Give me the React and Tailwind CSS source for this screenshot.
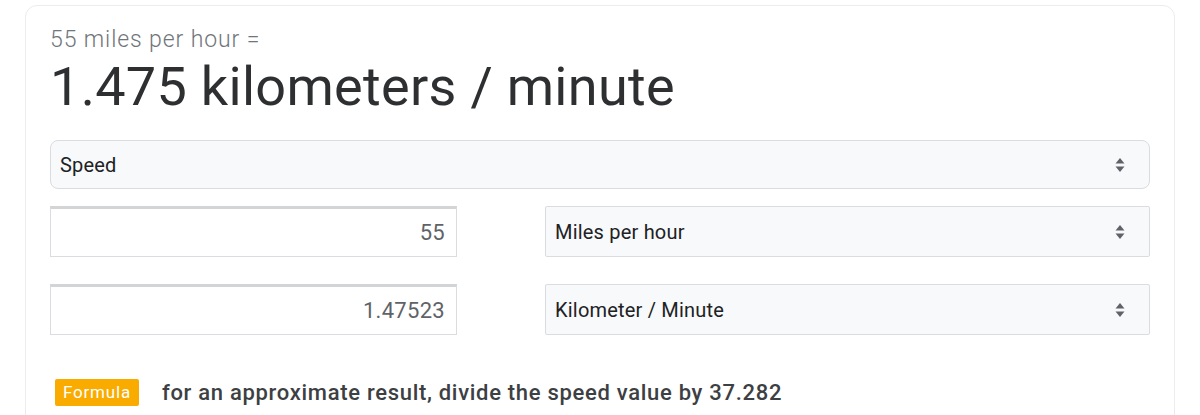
import React from "react";

const Arrows = () => (
  <svg width="10" height="16" viewBox="0 0 10 16" className="shrink-0">
    <path d="M5 1 L9.5 6.5 H0.5 Z" fill="#5f6368" />
    <path d="M5 15 L9.5 9.5 H0.5 Z" fill="#5f6368" />
  </svg>
);

const SelectBox = ({ label, className }) => (
  <div
    className={`flex items-center justify-between bg-[#f8f9fa] border border-[#dadce0] pl-[9px] pr-[24px] text-[20px] tracking-[0.2px] text-[#202124] ${className}`}
  >
    <span>{label}</span>
    <Arrows />
  </div>
);

const NumberBox = ({ value }) => (
  <div className="w-[407px] h-[51px] flex items-center justify-end border border-[#dadce0] border-t-[3px] border-t-[#d3d4d6] pr-[11px] text-[22px] tracking-[0.3px] text-[#5f6368] bg-white">
    {value}
  </div>
);

const App = () => {
  return (
    <div
      className="bg-white h-[415px] overflow-hidden pt-[5px] px-[25px]"
      style={{ fontFamily: "Roboto, 'Noto Sans', Arial, sans-serif" }}
    >
      <div className="border border-[#ececec] rounded-[12px] h-[430px] px-[24px] pt-[20px]">
        <div className="text-[23px] text-[#70757a] font-light leading-[28px] tracking-[0.9px]">
          55 miles per hour =
        </div>
        <div className="text-[54px] text-[#2d2f31] leading-[60px] mt-[3px] tracking-[0.3px]">
          1.475 kilometers / minute
        </div>
        <SelectBox
          label="Speed"
          className="mt-[23px] h-[49px] rounded-[8px]"
        />
        <div className="flex items-center mt-[17px]">
          <NumberBox value="55" />
          <SelectBox
            label="Miles per hour"
            className="ml-[88px] flex-1 h-[51px] rounded-[2px]"
          />
        </div>
        <div className="flex items-center mt-[27px]">
          <NumberBox value="1.47523" />
          <SelectBox
            label="Kilometer / Minute"
            className="ml-[88px] flex-1 h-[51px] rounded-[2px]"
          />
        </div>
        <div className="flex items-center mt-[41px] pl-[5px]">
          <span className="bg-[#f9ab00] text-white text-[17px] leading-[27px] px-[8px] tracking-[0.8px] rounded-[2px]">
            Formula
          </span>
          <span className="ml-[23px] text-[22px] text-[#3c4043] font-medium tracking-[0.7px]">
            for an approximate result, divide the speed value by 37.282
          </span>
        </div>
      </div>
    </div>
  );
};

export default App;
